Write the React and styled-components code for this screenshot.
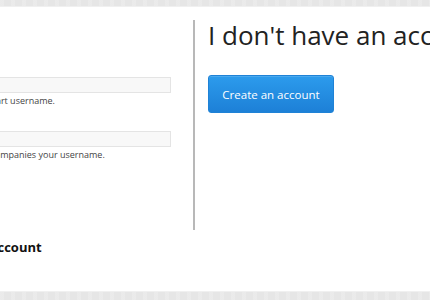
import React from "react";
import styled, { createGlobalStyle } from "styled-components";

const GlobalStyle = createGlobalStyle`
  html, body {
    margin: 0;
    padding: 0;
    overflow: hidden;
  }
  body {
    font-family: "Open Sans", "Liberation Sans", sans-serif;
    color: #333;
    background: #e6e6e6;
  }
`;

const Page = styled.div`
  width: 430px;
  height: 300px;
  display: flex;
  flex-direction: column;
  overflow: hidden;
`;

const Strip = styled.div`
  height: ${(p) => p.h}px;
  flex: 0 0 auto;
  background-color: #e6e6e6;
  background-image: repeating-linear-gradient(
    90deg,
    rgba(255, 255, 255, 0.18) 0px,
    rgba(255, 255, 255, 0.18) 4px,
    rgba(0, 0, 0, 0) 4px,
    rgba(0, 0, 0, 0) 11px
  );
  border-${(p) => (p.top ? "bottom" : "top")}: 1px solid #f0f0f0;
`;

const Main = styled.main`
  flex: 1;
  background: #fff;
  padding-top: 13px;
  display: flex;
  flex-direction: column;
  overflow: hidden;
`;

const Columns = styled.div`
  display: flex;
  height: 210px;
`;

const LeftColumn = styled.section`
  flex: 0 0 auto;
  width: 443px;
  margin-left: -250px;
  padding-right: 22px;
  box-sizing: border-box;
  padding-top: 57px;
  display: flex;
  flex-direction: column;
`;

const FormRow = styled.div`
  display: grid;
  grid-template-columns: 140px 1fr;
  column-gap: 11px;
  margin-bottom: ${(p) => p.mb || 0}px;
`;

const Label = styled.label`
  font-size: 12px;
  font-weight: 700;
  text-align: right;
  padding-top: 1px;
  color: #333;
`;

const Control = styled.div`
  display: flex;
  flex-direction: column;
`;

const Input = styled.input`
  box-sizing: border-box;
  width: 100%;
  height: 16px;
  margin: 0;
  border: 1px solid #e4e4e4;
  background: #f8f8f8;
  outline: none;
`;

const Help = styled.span`
  font-size: 9px;
  line-height: 12px;
  margin-top: 2px;
  color: #444;
  white-space: nowrap;
`;

const RightColumn = styled.section`
  flex: 1;
  border-left: 2px solid #b8b8b8;
  padding-left: 13px;
  min-width: 0;
`;

const Heading = styled.h2`
  margin: 0;
  font-size: 26px;
  font-weight: 400;
  line-height: 30px;
  color: #222;
  white-space: nowrap;
`;

const PrimaryButton = styled.button`
  margin-top: 25px;
  width: 126px;
  height: 38px;
  border: 1px solid #1f82d6;
  border-radius: 3px;
  background: linear-gradient(#2c9bec, #1d80d7);
  color: #fff;
  font-family: "Open Sans", "Liberation Sans", sans-serif;
  font-size: 11.5px;
  cursor: pointer;
  box-shadow: inset 0 1px 0 rgba(255, 255, 255, 0.15);
`;

const Below = styled.div`
  margin-left: -250px;
  padding-top: 8px;
  display: grid;
  grid-template-columns: 140px 1fr;
  column-gap: 11px;
`;

const SubHeading = styled.h3`
  grid-column: 2;
  margin: 0;
  font-size: 13px;
  font-weight: 700;
  color: #111;
  white-space: nowrap;
`;

export default function App() {
  return (
    <>
      <GlobalStyle />
      <Page>
        <Strip h={6} top />
        <Main>
          <Columns>
            <LeftColumn>
              <FormRow mb={24}>
                <Label>Username</Label>
                <Control>
                  <Input type="text" />
                  <Help>Please type in your Smart username.</Help>
                </Control>
              </FormRow>
              <FormRow>
                <Label>Password</Label>
                <Control>
                  <Input type="password" />
                  <Help>The password that accompanies your username.</Help>
                </Control>
              </FormRow>
            </LeftColumn>
            <RightColumn>
              <Heading>I don't have an account</Heading>
              <PrimaryButton>Create an account</PrimaryButton>
            </RightColumn>
          </Columns>
          <Below>
            <SubHeading>Recover your account</SubHeading>
          </Below>
        </Main>
        <Strip h={8} />
      </Page>
    </>
  );
}
